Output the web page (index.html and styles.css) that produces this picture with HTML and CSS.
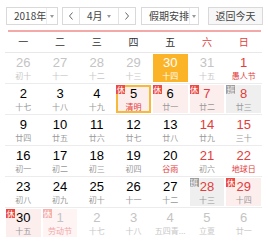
FILE: index.html
```html
<!DOCTYPE html>
<html lang="zh-CN">
<head>
<meta charset="utf-8">
<link rel="stylesheet" href="styles.css">
</head>
<body>
<div class="cal">
  <div class="toolbar">
    <div class="sel year"><span class="txt">2018年</span><span class="arr"><i class="tri"></i></span></div>
    <div class="month">
      <span class="nav"><svg width="6" height="8" viewBox="0 0 6 8"><polyline points="4.5,0.5 1.5,4 4.5,7.5" fill="none" stroke="#666" stroke-width="1"/></svg></span>
      <span class="mid"><span class="mtxt">4月</span><i class="tri"></i></span>
      <span class="nav"><svg width="6" height="8" viewBox="0 0 6 8"><polyline points="1.5,0.5 4.5,4 1.5,7.5" fill="none" stroke="#666" stroke-width="1"/></svg></span>
    </div>
    <div class="sel holiday"><span class="txt">假期安排</span><span class="arr"><i class="tri"></i></span></div>
    <div class="today">返回今天</div>
  </div>
  <div class="redline"></div>
  <div class="week">
    <span>一</span><span>二</span><span>三</span><span>四</span><span>五</span><span class="we">六</span><span class="we">日</span>
  </div>

  <div class="row">
    <div class="c other"><b>26</b><em>初十</em></div>
    <div class="c other"><b>27</b><em>十一</em></div>
    <div class="c other"><b>28</b><em>十二</em></div>
    <div class="c other"><b>29</b><em>十三</em></div>
    <div class="c cur"><b>30</b><em>十四</em></div>
    <div class="c other"><b>31</b><em>十五</em></div>
    <div class="c red fest"><b>1</b><em>愚人节</em></div>
  </div>

  <div class="row">
    <div class="c"><b>2</b><em>十七</em></div>
    <div class="c"><b>3</b><em>十八</em></div>
    <div class="c"><b>4</b><em>十九</em></div>
    <div class="c rest sel5 fest"><span class="badge">休</span><b>5</b><em>清明</em></div>
    <div class="c rest"><span class="badge">休</span><b>6</b><em>廿一</em></div>
    <div class="c rest red"><span class="badge">休</span><b>7</b><em>廿二</em></div>
    <div class="c work red"><span class="badge">班</span><b>8</b><em>廿三</em></div>
  </div>

  <div class="row">
    <div class="c"><b>9</b><em>廿四</em></div>
    <div class="c"><b>10</b><em>廿五</em></div>
    <div class="c"><b>11</b><em>廿六</em></div>
    <div class="c"><b>12</b><em>廿七</em></div>
    <div class="c"><b>13</b><em>廿八</em></div>
    <div class="c red"><b>14</b><em>廿九</em></div>
    <div class="c red"><b>15</b><em>三十</em></div>
  </div>

  <div class="row">
    <div class="c"><b>16</b><em>初一</em></div>
    <div class="c"><b>17</b><em>初二</em></div>
    <div class="c"><b>18</b><em>初三</em></div>
    <div class="c"><b>19</b><em>初四</em></div>
    <div class="c fest"><b>20</b><em>谷雨</em></div>
    <div class="c red"><b>21</b><em>初六</em></div>
    <div class="c red fest"><b>22</b><em>地球日</em></div>
  </div>

  <div class="row">
    <div class="c"><b>23</b><em>初八</em></div>
    <div class="c"><b>24</b><em>初九</em></div>
    <div class="c"><b>25</b><em>初十</em></div>
    <div class="c"><b>26</b><em>十一</em></div>
    <div class="c"><b>27</b><em>十二</em></div>
    <div class="c work red"><span class="badge">班</span><b>28</b><em>十三</em></div>
    <div class="c rest red"><span class="badge">休</span><b>29</b><em>十四</em></div>
  </div>

  <div class="row last">
    <div class="c rest"><span class="badge">休</span><b>30</b><em>十五</em></div>
    <div class="c rest other ofest"><span class="badge">休</span><b>1</b><em>劳动节</em></div>
    <div class="c other"><b>2</b><em>十七</em></div>
    <div class="c other"><b>3</b><em>十八</em></div>
    <div class="c other"><b>4</b><em>五四青...</em></div>
    <div class="c other"><b>5</b><em>立夏</em></div>
    <div class="c other"><b>6</b><em>廿一</em></div>
  </div>
</div>
</body>
</html>
```

FILE: styles.css
```css
* { box-sizing: border-box; }
html, body { margin: 0; padding: 0; background: #fff; }
body {
  width: 268px;
  height: 243px;
  overflow: hidden;
  font-family: "Noto Sans CJK SC", "Noto Sans", sans-serif;
  color: #333;
}
.cal { padding-left: 5px; }

.toolbar {
  display: flex;
  align-items: stretch;
  padding-top: 7px;
  height: 25px;
}
.sel, .month, .today {
  height: 18px;
  border: 1px solid #d9d9d9;
  background: #fff;
  font-size: 10px;
  line-height: 16px;
  color: #444;
}
.sel { display: flex; }
.sel .txt { flex: 1; padding-left: 7px; white-space: nowrap; }
.sel .arr {
  width: 13px;
  border-left: 1px solid #ececec;
  display: flex;
  align-items: center;
  justify-content: center;
}
.tri {
  display: block;
  width: 0;
  height: 0;
  border-top: 3px solid #999;
  border-left: 2.5px solid transparent;
  border-right: 2.5px solid transparent;
}
.year { width: 52px; margin-left: 1px; }
.month {
  display: flex;
  width: 74px;
  margin-left: 4px;
}
.month .nav {
  width: 16px;
  display: flex;
  align-items: center;
  justify-content: center;
}
.month .mid {
  flex: 1;
  display: flex;
  align-items: center;
  border-left: 1px solid #e3e3e3;
  border-right: 1px solid #e3e3e3;
  padding-left: 7px;
  padding-right: 7px;
  justify-content: space-between;
}
.holiday { width: 58px; margin-left: 5px; }
.today {
  width: 55px;
  margin-left: 9px;
  text-align: center;
  background: #f7f7f7;
}

.redline {
  margin-top: 5px;
  margin-left: 3px;
  width: 253px;
  height: 2px;
  background: #f4a9a9;
}

.week {
  display: grid;
  grid-template-columns: repeat(7, 1fr);
  width: 257px;
  height: 21px;
  border-bottom: 1px solid #e8e8e8;
  font-size: 10px;
  line-height: 20px;
  text-align: center;
  color: #333;
}
.week .we { color: #e23c3c; }

.row {
  display: grid;
  grid-template-columns: repeat(7, 1fr);
  width: 257px;
  height: 31px;
  border-bottom: 1px solid #ececec;
}
.row.last { border-bottom: none; }

.c {
  position: relative;
  margin: 1px 1px;
  height: 28px;
  padding-top: 2px;
  text-align: center;
}
.c b {
  display: block;
  font-family: "Liberation Sans", Arial, sans-serif;
  font-weight: normal;
  font-size: 13px;
  line-height: 14px;
  color: #000;
}
.c em {
  display: block;
  font-style: normal;
  font-size: 8px;
  line-height: 12px;
  color: #999;
  white-space: nowrap;
}
.c.red b { color: #e23c3c; }
.c.fest em { color: #e23c3c; }
.c.other b { color: #c4c4c4; }
.c.other em { color: #c8c8c8; }
.c.ofest em { color: #f2a6a6; }

.c.cur { background: #fbb427; }
.c.cur b, .c.cur em { color: #fff; }

.c.rest { background: #fdeeee; }
.c.work { background: #efefef; }
.c.other.rest { background: #fef4f4; }

.c.sel5 {
  border: 2px solid #f6b93a;
  padding-top: 0;
}

.badge {
  position: absolute;
  top: 0;
  left: 0;
  width: 9px;
  height: 9px;
  font-size: 8px;
  line-height: 9px;
  text-align: center;
  color: #fff;
  background: #ec4a44;
}
.work .badge { background: #9e9e9e; }
.other .badge { background: #f6b1ad; }
.sel5 .badge { top: -2px; left: -2px; }
```
